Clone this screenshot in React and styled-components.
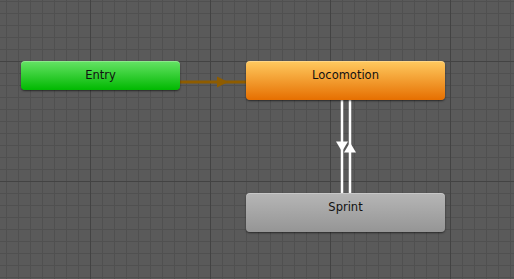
import React from "react";
import styled, { createGlobalStyle, css } from "styled-components";

const GlobalStyle = createGlobalStyle`
  html, body {
    margin: 0;
    padding: 0;
    background: #5a5a5a;
    overflow: hidden;
  }
`;

const nodes = [
  { id: "entry", label: "Entry", kind: "entry", x: 21, y: 61, w: 159, h: 29 },
  { id: "loco", label: "Locomotion", kind: "default", x: 246, y: 61, w: 199, h: 39 },
  { id: "sprint", label: "Sprint", kind: "normal", x: 246, y: 193, w: 199, h: 39 },
];

const App = () => {
  return (
    <>
      <GlobalStyle />
      <Canvas>
        <Edges width="514" height="279" viewBox="0 0 514 279">
          <line x1="180" y1="82" x2="246" y2="82" stroke="#8e5c00" strokeWidth="3" />
          <polygon points="217,76.5 228,82 217,87.5" fill="#8e5c00" />

          <line x1="342" y1="100" x2="342" y2="193" stroke="#fff" strokeWidth="2.5" />
          <polygon points="336,141.5 348,141.5 342,151.5" fill="#fff" />

          <line x1="350" y1="100" x2="350" y2="193" stroke="#fff" strokeWidth="2.5" />
          <polygon points="344,152.5 356,152.5 350,142.5" fill="#fff" />
        </Edges>
        {nodes.map((n) => (
          <Node
            key={n.id}
            $kind={n.kind}
            style={{ left: n.x, top: n.y, width: n.w, height: n.h }}
          >
            {n.label}
          </Node>
        ))}
      </Canvas>
    </>
  );
};

export default App;

const Canvas = styled.div`
  position: relative;
  width: 514px;
  height: 279px;
  background-color: #5a5a5a;
  background-image:
    linear-gradient(to right, #434343 1px, transparent 1px),
    linear-gradient(to bottom, #434343 1px, transparent 1px),
    linear-gradient(to right, #505050 1px, transparent 1px),
    linear-gradient(to bottom, #505050 1px, transparent 1px);
  background-size: 120px 120px, 120px 120px, 12px 12px, 12px 12px;
  background-position: 90px 0, 0 61px, 6px 0, 0 1px;
`;

const Edges = styled.svg`
  position: absolute;
  left: 0;
  top: 0;
`;

const kinds = {
  entry: css`
    background: linear-gradient(to bottom, #66e366, #00b900);
  `,
  default: css`
    background: linear-gradient(to bottom, #ffca60, #e66f00);
  `,
  normal: css`
    background: linear-gradient(to bottom, #b6b6b6, #959595);
  `,
};

const Node = styled.div`
  position: absolute;
  box-sizing: border-box;
  padding-top: 7px;
  border-radius: 4px;
  box-shadow: 0 1px 2px rgba(0, 0, 0, 0.55), inset 0 1px 0 rgba(255, 255, 255, 0.25);
  font-family: "DejaVu Sans", sans-serif;
  font-size: 11.5px;
  line-height: 15px;
  color: #111;
  text-align: center;
  ${(p) => kinds[p.$kind]}
`;
